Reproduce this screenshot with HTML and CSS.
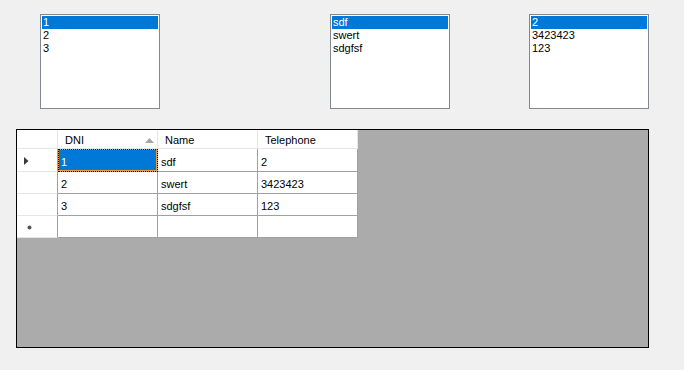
FILE: index.html
```html
<!DOCTYPE html>
<html>
<head>
<meta charset="utf-8">
<link rel="stylesheet" href="styles.css">
</head>
<body>
<div class="top">
  <div class="listbox lb1">
    <div class="item sel">1</div>
    <div class="item">2</div>
    <div class="item">3</div>
  </div>
  <div class="listbox lb2">
    <div class="item sel">sdf</div>
    <div class="item">swert</div>
    <div class="item">sdgfsf</div>
  </div>
  <div class="listbox lb3">
    <div class="item sel">2</div>
    <div class="item">3423423</div>
    <div class="item">123</div>
  </div>
</div>
<div class="dgv">
  <div class="table">
    <div class="hc rh-top"></div>
    <div class="hc">DNI<svg class="sort" width="9" height="5" viewBox="0 0 9 5"><polygon points="0,5 4.5,0 9,5" fill="#a6a6a6"/></svg></div>
    <div class="hc">Name</div>
    <div class="hc">Telephone</div>

    <div class="rh r1"><svg width="5" height="8" viewBox="0 0 5 8"><polygon points="0,0 4.5,4 0,8" fill="#3a3a3a"/></svg></div>
    <div class="c r1 selcell">1</div>
    <div class="c r1">sdf</div>
    <div class="c r1">2</div>

    <div class="rh"></div>
    <div class="c">2</div>
    <div class="c">swert</div>
    <div class="c">3423423</div>

    <div class="rh"></div>
    <div class="c">3</div>
    <div class="c">sdgfsf</div>
    <div class="c">123</div>

    <div class="rh star"><svg width="5" height="5" viewBox="0 0 5 5"><circle cx="2.5" cy="2.5" r="2" fill="#555"/></svg></div>
    <div class="c"></div>
    <div class="c"></div>
    <div class="c"></div>
  </div>
</div>
</body>
</html>
```
FILE: styles.css
```css
html, body {
  margin: 0;
  padding: 0;
  background: #f0f0f0;
  font-family: "Liberation Sans", Arial, sans-serif;
  font-size: 11px;
  color: #000;
}
.top {
  display: flex;
  padding: 14px 0 0 40px;
}
.listbox {
  box-sizing: border-box;
  width: 120px;
  height: 95px;
  border: 1px solid #828790;
  background: #fff;
  padding: 1px;
}
.lb2 { margin-left: 170px; }
.lb3 { margin-left: 79px; }
.item {
  height: 13px;
  line-height: 13px;
  padding-left: 1px;
  white-space: nowrap;
}
.item.sel {
  background: #0078d7;
  color: #fff;
}
.dgv {
  box-sizing: border-box;
  margin: 20px 0 0 16px;
  width: 633px;
  height: 219px;
  border: 1px solid #000;
  background: #ababab;
}
.table {
  display: grid;
  grid-template-columns: 41px 100px 100px 100px;
  grid-template-rows: 19px 23px 22px 22px 22px;
  width: 341px;
}
.hc {
  box-sizing: border-box;
  background: #fff;
  border-right: 1px solid #e5e5e5;
  border-bottom: 1px solid #e5e5e5;
  display: flex;
  align-items: center;
  padding-left: 7px;
  padding-top: 1px;
  position: relative;
}
.sort {
  position: absolute;
  right: 3px;
  top: 8px;
}
.rh {
  box-sizing: border-box;
  background: #fff;
  border-right: 1px solid #a0a0a0;
  border-bottom: 1px solid #e5e5e5;
  display: flex;
  align-items: center;
  padding-left: 7px;
}
.rh.r1 { padding-top: 1px; }
.rh.star { padding-left: 10px; padding-top: 1px; }
.c {
  box-sizing: border-box;
  background: #fff;
  border-right: 1px solid #a0a0a0;
  border-bottom: 1px solid #a0a0a0;
  display: flex;
  align-items: center;
  padding-left: 3px;
  padding-top: 3px;
  white-space: nowrap;
}
.c.selcell {
  background: #0078d7;
  color: #fff;
  box-shadow: inset 0 0 0 1px #f59a3a;
  outline: 1px dotted #000;
  outline-offset: -1px;
}
```
